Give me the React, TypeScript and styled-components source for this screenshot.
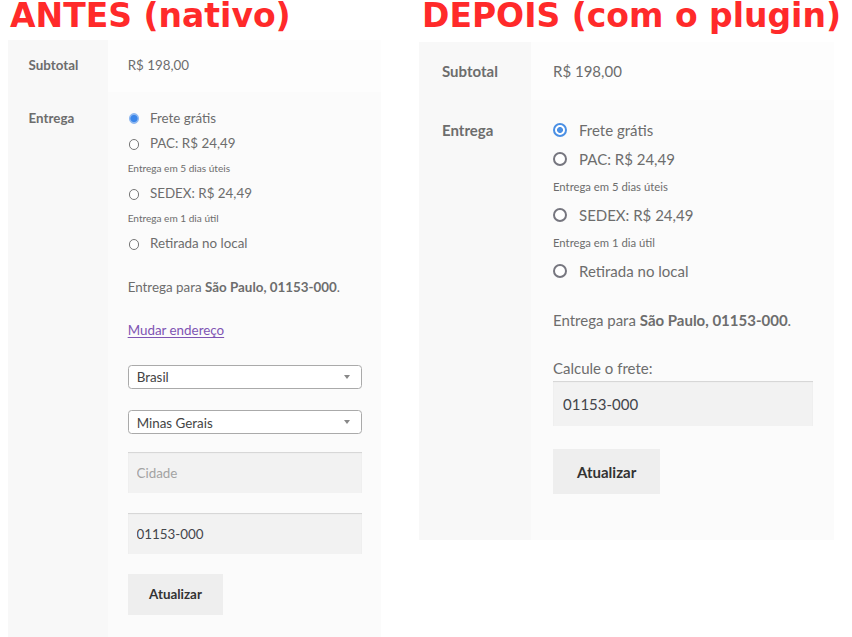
import React from "react";
import styled, { createGlobalStyle, css } from "styled-components";

// every size below is written in "units"; --u is 1px on the right panel
// and a bit smaller on the left one (that screenshot is scaled down)
const u = (n: number) => `calc(${n} * var(--u))`;

const GlobalStyle = createGlobalStyle`
  html, body {
    margin: 0;
    padding: 0;
    overflow: hidden;
    background: #fff;
  }
  body {
    font-family: Lato, "Liberation Sans", sans-serif;
  }
`;

const Page = styled.div`
  display: flex;
  align-items: flex-start;
  gap: 38px;
  padding-left: 8px;
`;

const Column = styled.section<{ $width: number }>`
  width: ${(p) => p.$width}px;
  display: flex;
  flex-direction: column;
`;

const Heading = styled.h1<{ $indent: number }>`
  margin: 0 0 0 ${(p) => p.$indent}px;
  font-family: "DejaVu Sans", sans-serif;
  font-weight: 700;
  font-size: 33px;
  line-height: 32px;
  color: #ff2a2a;
  white-space: nowrap;
`;

const Panel = styled.div<{ $scale: number; $offset: number }>`
  --u: ${(p) => p.$scale}px;
  margin-top: ${(p) => p.$offset}px;
  display: grid;
  grid-template-columns: ${u(112)} 1fr;
  color: #6d6d6d;
  font-size: ${u(15)};
`;

const HeadCell = styled.div<{ $alt?: boolean }>`
  background: #f8f8f8;
  font-weight: 700;
  padding: ${(p) => (p.$alt ? u(15.5) : u(18))} ${u(8)} 0 ${u(23)};
  line-height: ${(p) => (p.$alt ? u(29) : u(22))};
`;

const Cell = styled.div<{ $alt?: boolean }>`
  background: ${(p) => (p.$alt ? "#fbfbfb" : "#fdfdfd")};
  line-height: ${u(22)};
  padding: ${(p) =>
    p.$alt
      ? `${u(15.5)} ${u(21.5)} ${u(46)} ${u(22)}`
      : `${u(18)} ${u(21.5)} ${u(18)} ${u(22)}`};
`;

const Methods = styled.ul`
  list-style: none;
  margin: 0;
  padding: 0;
`;

const Method = styled.li`
  display: flex;
  align-items: center;
  gap: ${u(12)};
  line-height: ${u(29)};
`;

const Radio = styled.span<{ $checked?: boolean; $native?: boolean }>`
  flex: none;
  box-sizing: border-box;
  border-radius: 50%;
  background: #fff;
  ${(p) =>
    p.$native
      ? css`
          width: ${u(12)};
          height: ${u(12)};
          margin-left: ${u(1)};
          border: 1px solid #777;
        `
      : css`
          width: ${u(14)};
          height: ${u(14)};
          border: ${u(2)} solid #76767f;
        `}
  ${(p) =>
    p.$checked &&
    (p.$native
      ? css`
          border-color: #8fb8f0;
          background: radial-gradient(circle, #3b86ea 0 ${u(3.5)}, #8fb8f0 ${u(4.5)});
        `
      : css`
          border-color: #4a8fe4;
          background: radial-gradient(circle, #4a8fe4 0 ${u(2.6)}, #fff ${u(3.3)});
        `)}
`;

const Note = styled.p`
  margin: 0;
  font-size: ${u(11.3)};
  line-height: ${u(25)};
  padding-bottom: ${u(2)};
`;

const Destination = styled.p`
  margin: ${u(23.5)} 0 0;
`;

const ChangeLink = styled.a`
  display: inline-block;
  margin-top: ${u(26)};
  color: #7f54b3;
  text-decoration: underline;
  text-underline-offset: ${u(2)};
`;

const FieldLabel = styled.p`
  margin: ${u(26)} 0 0;
`;

const Select = styled.div<{ $gap: number }>`
  margin-top: ${(p) => u(p.$gap)};
  height: ${u(27)};
  box-sizing: border-box;
  display: flex;
  align-items: center;
  justify-content: space-between;
  padding: ${u(3)} ${u(12)} 0 ${u(9)};
  border: 1px solid #aaa;
  border-radius: ${u(4)};
  background: #fff;
  color: #444;
  line-height: ${u(20)};
`;

const Caret = styled.span`
  width: 0;
  height: 0;
  margin-top: ${u(-3)};
  border-style: solid;
  border-width: ${u(4.5)} ${u(3.5)} 0;
  border-color: #888 transparent transparent;
`;

const Field = styled.input<{ $gap: number; $height: number }>`
  display: block;
  width: 100%;
  box-sizing: border-box;
  margin: ${(p) => u(p.$gap)} 0 0;
  height: ${(p) => u(p.$height)};
  padding: 0 ${u(10)};
  border: 0;
  outline: 0;
  background: #f2f2f2;
  box-shadow: inset 0 1px 1px rgba(0, 0, 0, 0.125);
  font: inherit;
  color: #43454b;

  &::placeholder {
    color: #a3a3a3;
  }
`;

const Button = styled.button<{ $gap: number; $height: number }>`
  display: block;
  margin-top: ${(p) => u(p.$gap)};
  height: ${(p) => u(p.$height)};
  padding: 0 ${u(24)};
  border: 0;
  background: #eee;
  color: #333;
  font: inherit;
  font-weight: 700;
`;

type Option = { label: string; note?: string; checked?: boolean };

const options: Option[] = [
  { label: "Frete grátis", checked: true },
  { label: "PAC: R$ 24,49", note: "Entrega em 5 dias úteis" },
  { label: "SEDEX: R$ 24,49", note: "Entrega em 1 dia útil" },
  { label: "Retirada no local" },
];

const ShippingMethods = ({ native }: { native?: boolean }) => (
  <Methods>
    {options.map((o) => (
      <React.Fragment key={o.label}>
        <Method>
          <Radio $checked={o.checked} $native={native} />
          {o.label}
        </Method>
        {o.note && <Note>{o.note}</Note>}
      </React.Fragment>
    ))}
  </Methods>
);

const Totals = ({ native, children }: { native?: boolean; children: React.ReactNode }) => (
  <>
    <HeadCell>Subtotal</HeadCell>
    <Cell>R$ 198,00</Cell>
    <HeadCell $alt>Entrega</HeadCell>
    <Cell $alt>
      <ShippingMethods native={native} />
      <Destination>
        Entrega para <strong>São Paulo, 01153-000</strong>.
      </Destination>
      {children}
    </Cell>
  </>
);

export default function App() {
  return (
    <>
      <GlobalStyle />
      <Page>
        <Column $width={373}>
          <Heading $indent={2}>ANTES (nativo)</Heading>
          <Panel $scale={0.893} $offset={8}>
            <Totals native>
              <ChangeLink href="#">Mudar endereço</ChangeLink>
              <Select $gap={27}>
                Brasil
                <Caret />
              </Select>
              <Select $gap={23.5}>
                Minas Gerais
                <Caret />
              </Select>
              <Field $gap={20} $height={46} placeholder="Cidade" />
              <Field $gap={22.4} $height={46} defaultValue="01153-000" />
              <Button $gap={22.4} $height={46}>Atualizar</Button>
            </Totals>
          </Panel>
        </Column>
        <Column $width={415}>
          <Heading $indent={3}>DEPOIS (com o plugin)</Heading>
          <Panel $scale={1} $offset={10}>
            <Totals>
              <FieldLabel>Calcule o frete:</FieldLabel>
              <Field $gap={2} $height={45} defaultValue="01153-000" />
              <Button $gap={23} $height={45}>Atualizar</Button>
            </Totals>
          </Panel>
        </Column>
      </Page>
    </>
  );
}
